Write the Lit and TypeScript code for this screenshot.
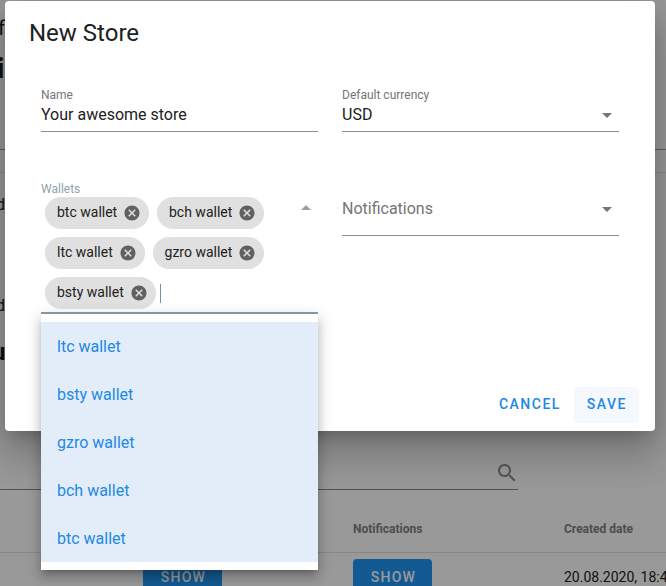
import { LitElement, html, css, svg } from "lit";
import { customElement } from "lit/decorators.js";

const CANCEL = svg`<path d="M12 2C6.47 2 2 6.47 2 12s4.47 10 10 10 10-4.47 10-10S17.53 2 12 2zm5 13.59L15.59 17 12 13.41 8.41 17 7 15.59 10.59 12 7 8.41 8.41 7 12 10.59 15.59 7 17 8.41 13.41 12 17 15.59z"/>`;

@customElement("app-root")
export class AppRoot extends LitElement {
  static styles = css`
    :host { display: block; width: 666px; height: 586px; font-family: Roboto, "Liberation Sans", sans-serif; }
    .stage { position: relative; width: 666px; height: 586px; overflow: hidden; background: #fff; color: #212121; }
    .page { display: flex; flex-direction: column; height: 586px; }
    .page > * { flex: none; }
    .frag { height: 20px; line-height: 20px; font-size: 20px; white-space: nowrap; }
    .f { margin-top: 18px; height: 20px; margin-left: -2px; font-size: 20px; }
    .i { margin-top: 17px; height: 28px; line-height: 28px; font-size: 28px; font-weight: 700; margin-left: -3px; }
    .rule1 { margin-top: 66px; height: 1px; background: rgba(0,0,0,.38); }
    .rule2 { margin-top: 22px; height: 1px; background: rgba(0,0,0,.12); }
    .d1 { margin-top: 22px; font-size: 16px; margin-left: -4px; }
    .d2 { margin-top: 81px; font-size: 16px; margin-left: -4px; }
    .u { margin-top: 22px; height: 28px; line-height: 28px; font-size: 24px; font-weight: 700; margin-left: -8px; }
    .search { margin-top: 84px; height: 40px; width: 518px; box-sizing: border-box; border-bottom: 1px solid rgba(0,0,0,.45); display: flex; justify-content: flex-end; align-items: flex-start; }
    .search svg { width: 24px; height: 24px; fill: rgba(0,0,0,.45); margin: 11px -1px 0 0; }
    .thead, .tbody { display: grid; grid-template-columns: 143px 210px 211px 1fr; }
    .thead { height: 63px; box-sizing: border-box; border-bottom: 1px solid rgba(0,0,0,.12); align-items: end; padding-bottom: 16px; font-size: 12px; font-weight: 700; line-height: 14px; color: #808080; }
    .tbody { padding-top: 6px; font-size: 14px; align-items: center; white-space: nowrap; }
    .cell-3 { grid-column: 3; }
    .cell-4 { grid-column: 4; }
    .show { width: 79px; height: 36px; box-sizing: border-box; padding-left: 2px; background: #2196f3; color: #fff; border-radius: 4px; font-size: 14px; font-weight: 500; letter-spacing: 1.25px; display: flex; align-items: center; justify-content: center; }
    .scrim { position: absolute; inset: 0; background: rgba(0,0,0,.4); }
    .modal { position: absolute; left: 5px; top: 1px; width: 650px; height: 430px; display: flex; flex-direction: column; background: #fff; border-radius: 4px; box-shadow: 0 11px 15px -7px rgba(0,0,0,.2), 0 24px 38px 3px rgba(0,0,0,.14), 0 9px 46px 8px rgba(0,0,0,.12); }
    .title { margin: 0; padding: 15px 24px 15px; height: 32px; font-size: 24px; line-height: 34px; font-weight: 400; color: #212121; }
    .form { flex: 1; padding: 25px 36px 0; display: grid; grid-template-columns: 277px 277px; column-gap: 24px; row-gap: 49px; align-content: start; }
    .field { position: relative; box-sizing: border-box; border-bottom: 1px solid #8c8c8c; }
    .label { font-size: 12px; line-height: 14px; color: #757575; white-space: nowrap; }
    .value { display: flex; justify-content: space-between; align-items: flex-start; height: 29px; font-size: 16px; line-height: 19px; padding-top: 2.5px; box-sizing: border-box; }
    .arrow { width: 24px; height: 24px; flex: none; fill: #757575; }
    .value .arrow { margin-top: -1.5px; }
    .wallets { border-bottom: 2px solid #88a0aa; height: 133px; }
    .wallets .label { height: 12px; line-height: 16px; color: #90a4ae; }
    .auto { display: flex; align-items: flex-start; }
    .auto .arrow { fill: #90a4ae; margin-top: 3px; }
    .chips { flex: 1; display: flex; flex-wrap: wrap; align-items: center; gap: 8px; padding: 4px 16px 0 4px; }
    .chip { height: 32px; box-sizing: border-box; padding-bottom: 2px; display: flex; align-items: center; background: #e0e0e0; border-radius: 16px; padding-left: 12px; font-size: 14px; color: #212121; white-space: nowrap; }
    .chip svg { width: 18px; height: 18px; fill: #616161; margin: 2px 7.8px 0 6px; }
    .caret { width: 1px; height: 19px; background: #78909c; margin-left: -4px; }
    .notif { height: 55px; display: flex; justify-content: space-between; align-items: flex-start; padding-top: 18px; font-size: 16px; line-height: 19px; color: #757575; }
    .notif .arrow { margin-top: -2px; }
    .menu { position: absolute; left: 0; top: 133px; width: 277px; box-sizing: border-box; padding: 8px 0; background: #fff; box-shadow: 0 5px 5px -3px rgba(0,0,0,.2), 0 8px 10px 1px rgba(0,0,0,.14), 0 3px 14px 2px rgba(0,0,0,.12); z-index: 2; }
    .item { height: 48px; display: flex; align-items: center; padding-left: 16px; background: #e3edf9; color: #1e88e5; font-size: 16px; }
    .actions { display: flex; justify-content: flex-end; gap: 0; padding: 0 16px 8px; }
    .btn { height: 36px; box-sizing: border-box; padding: 0 13px 2px; display: flex; align-items: center; border-radius: 4px; color: #1e88e5; font-size: 14px; font-weight: 500; letter-spacing: 1.5px; }
    .btn.on { background: #f5f9fe; padding-right: 12px; }
  `;

  chip(name: string) {
    return html`<span class="chip">${name}<svg viewBox="0 0 24 24">${CANCEL}</svg></span>`;
  }

  render() {
    const chips = ["btc wallet", "bch wallet", "ltc wallet", "gzro wallet", "bsty wallet"];
    const items = ["ltc wallet", "bsty wallet", "gzro wallet", "bch wallet", "btc wallet"];
    return html`<div class="stage">
      <div class="page">
        <div class="frag f">f</div>
        <div class="frag i">i</div>
        <div class="rule1"></div>
        <div class="rule2"></div>
        <div class="frag d1">d</div>
        <div class="frag d2">d</div>
        <div class="frag u">u</div>
        <div class="search"><svg viewBox="0 0 24 24"><path d="M15.5 14h-.79l-.28-.27C15.41 12.59 16 11.11 16 9.5 16 5.91 13.09 3 9.5 3S3 5.91 3 9.5 5.91 16 9.5 16c1.61 0 3.09-.59 4.23-1.57l.27.28v.79l5 4.99L20.49 19l-4.99-5zm-6 0C7.01 14 5 11.99 5 9.5S7.01 5 9.5 5 14 7.01 14 9.5 11.99 14 9.5 14z"/></svg></div>
        <div class="thead"><div class="cell-3">Notifications</div><div class="cell-4">Created date</div></div>
        <div class="tbody"><div></div><div class="show">SHOW</div><div class="show">SHOW</div><div>20.08.2020, 18:4</div></div>
      </div>
      <div class="scrim"></div>
      <div class="modal">
        <h2 class="title">New Store</h2>
        <div class="form">
          <div class="field"><div class="label">Name</div><div class="value"><span>Your awesome store</span></div></div>
          <div class="field"><div class="label">Default currency</div><div class="value"><span>USD</span><svg class="arrow" viewBox="0 0 24 24"><path d="M7 10l5 5 5-5z"/></svg></div></div>
          <div class="field wallets">
            <div class="label">Wallets</div>
            <div class="auto">
              <div class="chips">${chips.map((c) => this.chip(c))}<span class="caret"></span></div>
              <svg class="arrow" viewBox="0 0 24 24"><path d="M7 14l5-5 5 5z"/></svg>
            </div>
            <div class="menu">${items.map((i) => html`<div class="item">${i}</div>`)}</div>
          </div>
          <div class="field notif"><span>Notifications</span><svg class="arrow" viewBox="0 0 24 24"><path d="M7 10l5 5 5-5z"/></svg></div>
        </div>
        <div class="actions"><div class="btn">CANCEL</div><div class="btn on">SAVE</div></div>
      </div>
    </div>`;
  }
}
